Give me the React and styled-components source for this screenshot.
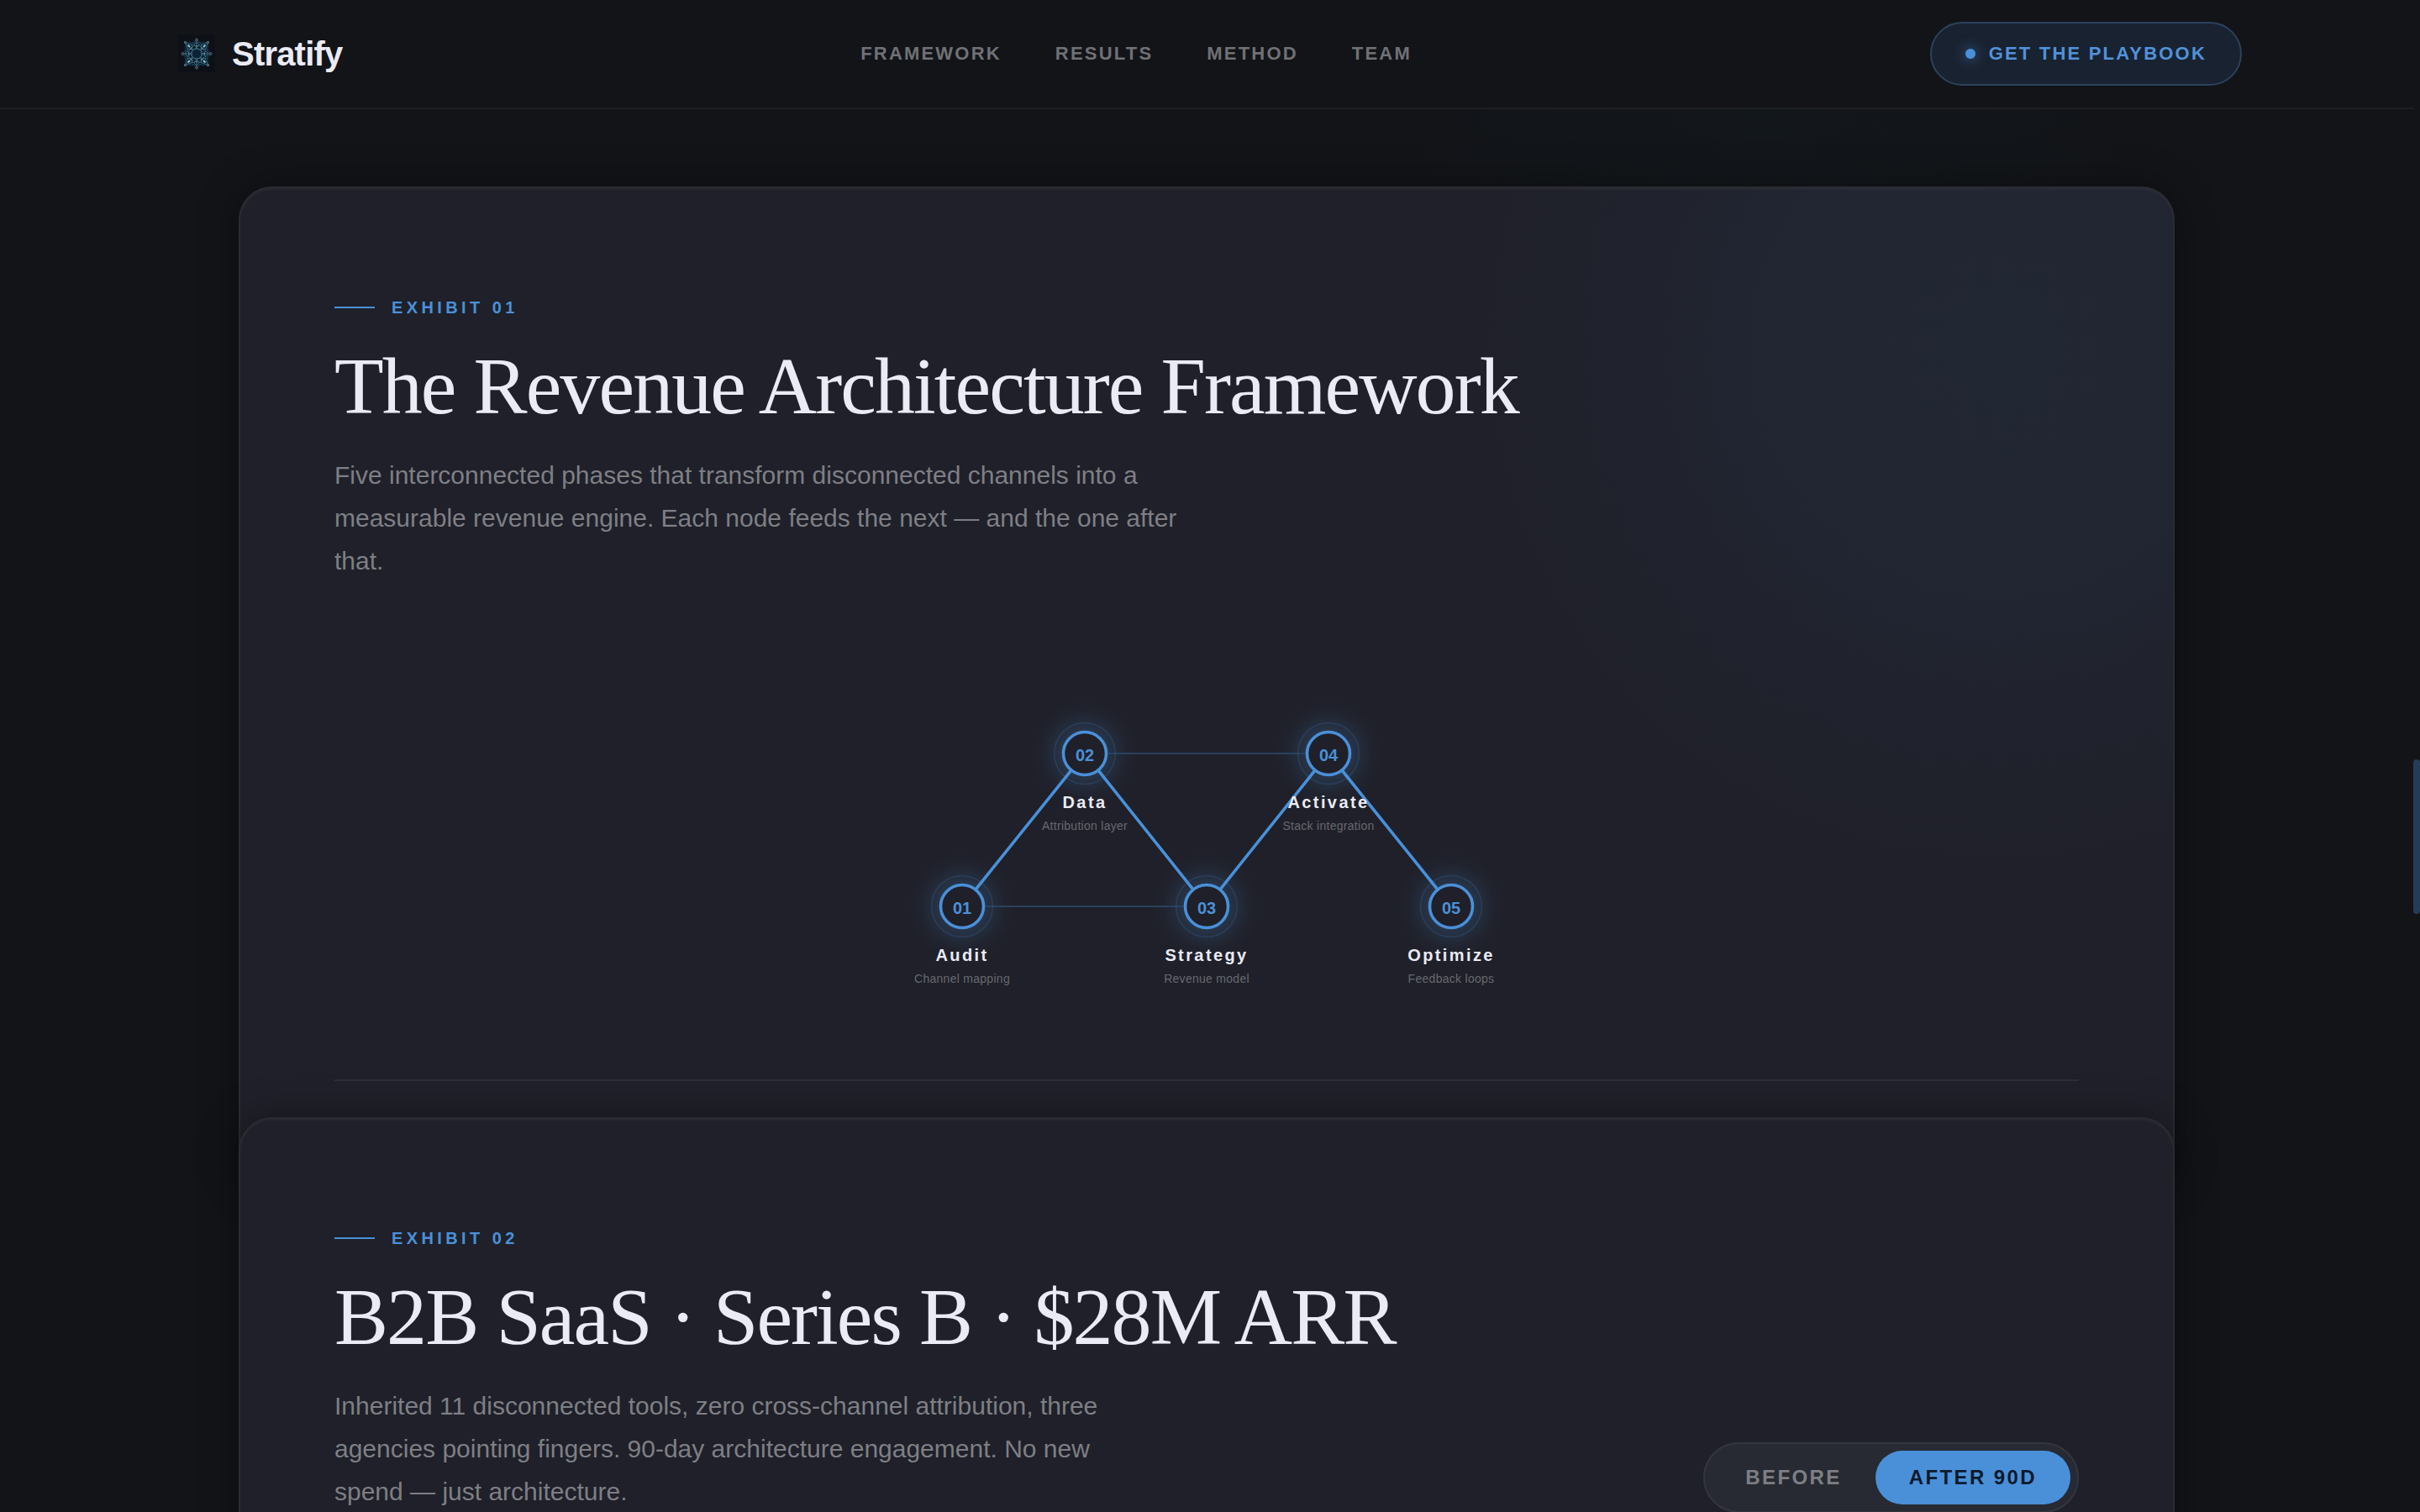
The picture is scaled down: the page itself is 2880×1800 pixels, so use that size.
import React, { useState } from "react";
import styled, { createGlobalStyle } from "styled-components";

const c = {
  page: "#121418",
  card: "#1f2029",
  accent: "#4a90d9",
  text: "#eaebf5",
  muted: "#7e7f85",
  dim: "#707176",
};

const sans = `"Liberation Sans", Arial, sans-serif`;
const serif = `"Liberation Serif", "Times New Roman", serif`;

const GlobalStyle = createGlobalStyle`
  *, *::before, *::after { box-sizing: border-box; }
  html, body { margin: 0; background: ${c.page}; }
  body { font-family: ${sans}; color: ${c.text}; -webkit-font-smoothing: antialiased; }
  h1, h2, p { margin: 0; font-weight: 400; }
  a { color: inherit; text-decoration: none; }
`;

const Shell = styled.div`
  height: 100vh;
  overflow: hidden;
`;

const Content = styled.div`
  padding-right: 8px;
  background: radial-gradient(ellipse 440px 320px at 73% 0, rgba(40, 110, 110, 0.04), transparent);
`;

/* Scroll indicator that lies over the right edge of the window */
const Rail = styled.div`
  position: fixed;
  inset: 0 0 0 auto;
  width: 8px;
  padding-top: 904px;
  background: ${c.page};
`;

const Thumb = styled.div`
  height: 184px;
  border-radius: 4px;
  background: #243c58;
`;

const Header = styled.header`
  background: ${c.page};
  border-bottom: 2px solid #1d1f23;
`;

const HeaderInner = styled.div`
  width: 86%;
  max-width: 2456px;
  height: 128px;
  margin: 0 auto;
  display: flex;
  align-items: center;
  justify-content: space-between;
`;

const Brand = styled.a`
  display: flex;
  align-items: center;
  gap: 20px;
  font-size: 40px;
  line-height: 48px;
  font-weight: 700;
  letter-spacing: -0.02em;
`;

const Nav = styled.nav`
  display: flex;
  gap: 64px;
`;

const NavLink = styled.a`
  font-size: 22px;
  line-height: 28px;
  font-weight: 700;
  letter-spacing: 0.1em;
  text-transform: uppercase;
  color: ${c.dim};
`;

const Cta = styled.button`
  display: flex;
  align-items: center;
  gap: 16px;
  height: 76px;
  padding: 0 40px;
  border: 2px solid #2c425c;
  border-radius: 38px;
  background: #192230;
  color: #5192da;
  font-family: ${sans};
  font-size: 22px;
  line-height: 28px;
  font-weight: 700;
  letter-spacing: 0.1em;
  text-transform: uppercase;
  cursor: pointer;
`;

const Dot = styled.span`
  width: 12px;
  height: 12px;
  border-radius: 50%;
  background: ${c.accent};
  box-shadow: 0 0 16px rgba(74, 144, 217, 0.8);
`;

const Stack = styled.main`
  width: 90%;
  max-width: 2304px;
  margin: 0 auto;
  padding-top: 92px;
`;

const Card = styled.section`
  position: relative;
  padding: 128px 112px;
  border: 2px solid #2b2c32;
  border-radius: 40px;
  background-color: ${c.card};
  background-image: ${(p) =>
    p.$glow
      ? "radial-gradient(circle 620px at calc(100% - 206px) 190px, rgba(74, 144, 217, 0.06) 0%, rgba(74, 144, 217, 0.05) 45%, transparent 100%)"
      : "none"};
  box-shadow: 0 0 48px rgba(0, 0, 0, 0.35), inset 0 2px 0 rgba(255, 255, 255, 0.03);

  & + & {
    margin-top: -87px;
  }
`;

const CardHead = styled.div`
  display: flex;
  align-items: flex-end;
  justify-content: space-between;
  gap: 64px;
`;

const Eyebrow = styled.div`
  display: flex;
  align-items: center;
  gap: 20px;
  font-size: 20px;
  line-height: 28px;
  font-weight: 700;
  letter-spacing: 0.22em;
  text-transform: uppercase;
  color: ${c.accent};

  &::before {
    content: "";
    width: 48px;
    height: 2px;
    background: ${c.accent};
  }
`;

const Title = styled.h2`
  margin-top: 24px;
  font-family: ${serif};
  font-size: 96px;
  line-height: 112px;
  letter-spacing: -0.02em;
`;

const Lead = styled.p`
  max-width: ${(p) => p.$width}px;
  margin-top: 24px;
  font-size: 30px;
  line-height: 51px;
  font-weight: 300;
  color: ${c.muted};
`;

const Diagram = styled.svg`
  display: block;
  width: 728px;
  max-width: 100%;
  margin: 96px auto 64px;
  font-family: ${sans};
  text-anchor: middle;
`;

const NodeNumber = styled.text`
  font-size: 20px;
  font-weight: 700;
  fill: ${c.accent};
`;

const NodeLabel = styled.text`
  font-size: 20px;
  font-weight: 700;
  letter-spacing: 0.12em;
  fill: ${c.text};
`;

const NodeNote = styled.text`
  font-size: 14px;
  letter-spacing: 0.02em;
  fill: #686970;
`;

const Divider = styled.hr`
  height: 2px;
  margin: 0;
  border: 0;
  background: #2d2e37;
`;

const Toggle = styled.div`
  flex: none;
  display: flex;
  padding: 8px;
  border: 2px solid #34363e;
  border-radius: 42px;
  background: #272a32;
`;

const ToggleButton = styled.button`
  height: 64px;
  padding: 0 40px;
  border: 0;
  border-radius: 32px;
  background: ${(p) => (p.$active ? c.accent : "transparent")};
  color: ${(p) => (p.$active ? "#0d1a2b" : c.muted)};
  font-family: ${sans};
  font-size: 24px;
  line-height: 28px;
  font-weight: 700;
  letter-spacing: 0.1em;
  text-transform: uppercase;
  cursor: pointer;
`;

const quarter = [0, 90, 180, 270];
const eighth = [0, 45, 90, 135, 180, 225, 270, 315];

function Logo() {
  return (
    <svg width="44" height="44" viewBox="-22 -22 44 44" fill="none" aria-hidden="true">
      <rect x="-22" y="-22" width="44" height="44" fill="#0d1117" />
      <g strokeWidth="1">
        <rect x="-13" y="-13" width="26" height="26" stroke="#1b4a66" />
        <path d="M0-17 17 0 0 17-17 0Z" stroke="#1d4357" />
        <path d="M-13-13-4-10 0-14 4-10 13-13 10-4 14 0 10 4 13 13 4 10 0 14-4 10-13 13-10 4-14 0-10-4Z" stroke="#2f6580" />
        <circle r="9.500" stroke="#27566e" />
        <path d="M-2.500-6h5L6-2.500v5L2.500 6h-5L-6 2.500v-5Z" fill="#0c2334" stroke="#5a97b0" />
      </g>
      {eighth.map((a) => (
        <g key={a} transform={`rotate(${a})`}>
          <path d="M-3-11 0-7 3-11" stroke="#3c7690" strokeWidth="1" />
          <circle cy="-9.500" r="1" fill="#5d94ad" />
        </g>
      ))}
      {quarter.map((a) => (
        <g key={a} transform={`rotate(${a})`}>
          <path d="M0-10v-5" stroke="#3a6a80" strokeWidth="1" />
          <circle cy="-16.500" r="1.500" stroke="#59666f" />
          <rect x="-15" y="-15" width="3" height="3" fill="#43606f" />
          <path d="M-10.500-10.500-8-8" stroke="#8fc3dc" strokeWidth="2" />
        </g>
      ))}
    </svg>
  );
}

const nodes = [
  { n: "01", x: 73, y: 290, label: "Audit", note: "Channel mapping" },
  { n: "02", x: 219, y: 108, label: "Data", note: "Attribution layer" },
  { n: "03", x: 364, y: 290, label: "Strategy", note: "Revenue model" },
  { n: "04", x: 509, y: 108, label: "Activate", note: "Stack integration" },
  { n: "05", x: 655, y: 290, label: "Optimize", note: "Feedback loops" },
];

function FrameworkDiagram() {
  return (
    <Diagram viewBox="0 0 728 432" role="img" aria-label="Framework phases">
      <defs>
        <radialGradient id="halo">
          <stop offset="0.35" stopColor={c.accent} stopOpacity="0.22" />
          <stop offset="0.6" stopColor={c.accent} stopOpacity="0.1" />
          <stop offset="0.8" stopColor={c.accent} stopOpacity="0.03" />
          <stop offset="1" stopColor={c.accent} stopOpacity="0" />
        </radialGradient>
      </defs>
      {nodes.map((d) => (
        <circle key={d.n} cx={d.x} cy={d.y} r="64" fill="url(#halo)" />
      ))}
      <path d="M219 108H509M73 290H364" stroke="#29415f" strokeWidth="2" />
      <polyline
        points={nodes.map((d) => `${d.x},${d.y}`).join(" ")}
        fill="none"
        stroke={c.accent}
        strokeWidth="3.6"
      />
      {nodes.map((d) => (
        <g key={d.n}>
          <circle cx={d.x} cy={d.y} r="36.400" fill="none" stroke={c.accent} strokeOpacity="0.15" strokeWidth="2" />
          <circle cx={d.x} cy={d.y} r="25.500" fill={c.card} stroke={c.accent} strokeWidth="3.6" />
          <NodeNumber x={d.x} y={d.y + 9}>{d.n}</NodeNumber>
          <NodeLabel x={d.x} y={d.y + 65}>{d.label}</NodeLabel>
          <NodeNote x={d.x} y={d.y + 91}>{d.note}</NodeNote>
        </g>
      ))}
    </Diagram>
  );
}

export default function App() {
  const [view, setView] = useState("after");
  return (
    <>
      <GlobalStyle />
      <Shell>
        <Header>
          <HeaderInner>
            <Brand href="#top">
              <Logo />
              Stratify
            </Brand>
            <Nav>
              <NavLink href="#framework">Framework</NavLink>
              <NavLink href="#results">Results</NavLink>
              <NavLink href="#method">Method</NavLink>
              <NavLink href="#team">Team</NavLink>
            </Nav>
            <Cta type="button">
              <Dot />
              Get the Playbook
            </Cta>
          </HeaderInner>
        </Header>
        <Content>
          <Stack>
            <Card id="framework" $glow>
              <Eyebrow>Exhibit 01</Eyebrow>
              <Title>The Revenue Architecture Framework</Title>
              <Lead $width={1040}>
                Five interconnected phases that transform disconnected channels into a measurable
                revenue engine. Each node feeds the next — and the one after that.
              </Lead>
              <FrameworkDiagram />
              <Divider />
            </Card>
            <Card id="results">
              <CardHead>
                <div>
                  <Eyebrow>Exhibit 02</Eyebrow>
                  <Title>B2B SaaS · Series B · $28M ARR</Title>
                  <Lead $width={960}>
                    Inherited 11 disconnected tools, zero cross-channel attribution, three agencies
                    pointing fingers. 90-day architecture engagement. No new spend — just
                    architecture.
                  </Lead>
                </div>
                <Toggle role="group" aria-label="Results period">
                  <ToggleButton
                    type="button"
                    $active={view === "before"}
                    aria-pressed={view === "before"}
                    onClick={() => setView("before")}
                  >
                    Before
                  </ToggleButton>
                  <ToggleButton
                    type="button"
                    $active={view === "after"}
                    aria-pressed={view === "after"}
                    onClick={() => setView("after")}
                  >
                    After 90d
                  </ToggleButton>
                </Toggle>
              </CardHead>
            </Card>
          </Stack>
        </Content>
        <Rail>
          <Thumb />
        </Rail>
      </Shell>
    </>
  );
}
